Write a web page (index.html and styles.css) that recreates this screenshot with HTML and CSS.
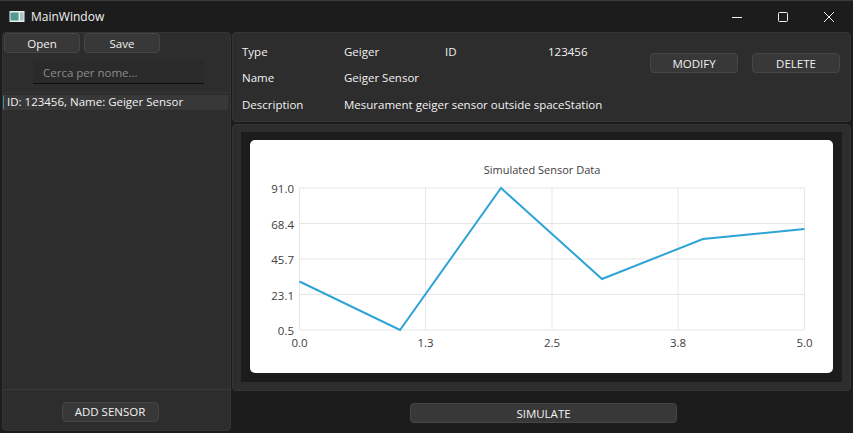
FILE: index.html
```html
<!DOCTYPE html>
<html lang="en">
<head>
    <meta charset="UTF-8">
    <meta name="viewport" content="width=device-width, initial-scale=1.0">
    <title>MainWindow</title>
    <link rel="stylesheet" href="styles.css">
</head>
<body>
    <div class="window">
        <header class="titlebar">
            <svg class="app-icon" width="16" height="14" viewBox="0 0 16 14">
                <rect x="0.5" y="1" width="15" height="11" fill="#e8eeee"/>
                <rect x="1.5" y="2.5" width="8" height="8" fill="#4f9a8c"/>
                <rect x="11" y="2.5" width="3.5" height="8" fill="#a9c4c8"/>
            </svg>
            <span class="title">MainWindow</span>
            <div class="window-buttons">
                <svg width="12" height="12" viewBox="0 0 12 12"><path d="M1 6.5H11" stroke="#f0f0f0" fill="none"/></svg>
                <svg width="12" height="12" viewBox="0 0 12 12"><rect x="1.5" y="1.5" width="9" height="9" rx="1" stroke="#f0f0f0" fill="none"/></svg>
                <svg width="12" height="12" viewBox="0 0 12 12"><path d="M1 1L11 11M11 1L1 11" stroke="#f0f0f0" fill="none"/></svg>
            </div>
        </header>

        <div class="content">
            <aside class="sidebar">
                <div class="file-buttons">
                    <button class="btn file-btn">Open</button>
                    <button class="btn file-btn">Save</button>
                </div>
                <div class="search-row">
                    <input class="search" type="text" placeholder="Cerca per nome...">
                </div>
                <ul class="sensor-list">
                    <li class="sensor-item">ID: 123456, Name: Geiger Sensor</li>
                </ul>
                <div class="sidebar-footer">
                    <button class="btn add-btn">ADD SENSOR</button>
                </div>
            </aside>

            <main class="main">
                <section class="details panel">
                    <div class="details-grid">
                        <span>Type</span><span>Geiger</span><span>ID</span><span>123456</span>
                        <span>Name</span><span class="wide">Geiger Sensor</span>
                        <span>Description</span><span class="wide">Mesurament geiger sensor outside spaceStation</span>
                    </div>
                    <div class="detail-buttons">
                        <button class="btn action-btn">MODIFY</button>
                        <button class="btn action-btn">DELETE</button>
                    </div>
                </section>

                <section class="chart-panel panel">
                    <div class="chart-well">
                        <div class="chart-card">
                            <svg class="chart" width="583" height="233" viewBox="250 140 583 233">
                                <g class="grid">
                                    <path d="M299.5 188H804.5M299.5 223.5H804.5M299.5 259H804.5M299.5 294.5H804.5M299.5 330H804.5"/>
                                    <path d="M299.5 188V330M425.5 188V330M552 188V330M678 188V330M804.5 188V330"/>
                                </g>
                                <path class="series" d="M299.5 281.5L400 330L501 188L602 279L703 239L804.5 229"/>
                                <text class="chart-title" x="542" y="174">Simulated Sensor Data</text>
                                <g class="y-labels">
                                    <text x="294" y="193">91.0</text>
                                    <text x="294" y="229">68.4</text>
                                    <text x="294" y="264">45.7</text>
                                    <text x="294" y="300">23.1</text>
                                    <text x="294" y="335">0.5</text>
                                </g>
                                <g class="x-labels">
                                    <text x="299.5" y="347">0.0</text>
                                    <text x="425.5" y="347">1.3</text>
                                    <text x="552" y="347">2.5</text>
                                    <text x="678" y="347">3.8</text>
                                    <text x="804.5" y="347">5.0</text>
                                </g>
                            </svg>
                        </div>
                    </div>
                </section>

                <div class="simulate-row">
                    <button class="btn simulate-btn">SIMULATE</button>
                </div>
            </main>
        </div>
    </div>
</body>
</html>
```

FILE: styles.css
```css
* {
    box-sizing: border-box;
}

body {
    margin: 0;
    width: 853px;
    height: 433px;
    overflow: hidden;
    background-color: #1c1c1c;
    color: #f2f2f2;
    font-family: "Open Sans", "Noto Sans", sans-serif;
    font-size: 11.5px;
}

.window {
    display: flex;
    flex-direction: column;
    height: 433px;
    border-top: 1px solid #3a3a3a;
    background-color: #1c1c1c;
}

.titlebar {
    display: flex;
    align-items: center;
    height: 31px;
    padding-left: 9px;
    flex-shrink: 0;
}

.title {
    margin-left: 6px;
    font-size: 12px;
}

.window-buttons {
    display: flex;
    gap: 34px;
    margin-left: auto;
    margin-right: 18px;
}

.content {
    display: flex;
    gap: 1px;
    flex: 1;
    padding: 0 2px 2px;
    min-height: 0;
}

.btn {
    height: 20px;
    padding: 0;
    background-color: #383838;
    border: 1px solid #464646;
    border-radius: 4px;
    color: #f2f2f2;
    font-family: inherit;
    font-size: 11.5px;
}

.sidebar {
    display: flex;
    flex-direction: column;
    width: 229px;
    background-color: #2d2d2d;
    border: 1px solid #353535;
    border-radius: 4px;
}

.file-buttons {
    display: flex;
    gap: 4px;
    padding: 0 0 0 1px;
}

.file-btn {
    width: 76px;
}

.search-row {
    padding: 8px 0 0 30px;
    border-bottom: 1px solid #353535;
    height: 40px;
}

.search {
    display: block;
    width: 171px;
    height: 23px;
    padding: 0 10px;
    background-color: #2a2a2a;
    border: none;
    border-bottom: 1px solid #0c0c0c;
    border-radius: 3px 3px 0 0;
    color: #f2f2f2;
    font-family: inherit;
    font-size: 11.5px;
}

.search::placeholder {
    color: #8c8c8c;
}

.sensor-list {
    flex: 1;
    margin: 0;
    padding: 2px 2px 0 0;
    list-style: none;
}

.sensor-item {
    height: 15px;
    padding-left: 3px;
    line-height: 14px;
    background-color: #383838;
    border-left: 1px solid #3c8f97;
    border-radius: 2px;
}

.sidebar-footer {
    display: flex;
    justify-content: center;
    align-items: center;
    height: 41px;
    border-top: 1px solid #3a3a3a;
    padding-right: 13px;
    padding-top: 3px;
}

.add-btn {
    width: 97px;
}

.main {
    display: flex;
    flex-direction: column;
    flex: 1;
    min-width: 0;
}

.panel {
    background-color: #2d2d2d;
    border: 1px solid #353535;
    border-radius: 4px;
}

.details {
    display: flex;
    height: 90px;
    flex-shrink: 0;
}

.details-grid {
    display: grid;
    grid-template-columns: 102px 101px 103px 100px;
    grid-auto-rows: 26.5px;
    align-items: center;
    padding: 5px 0 0 9px;
    width: 417px;
}

.wide {
    grid-column: span 3;
}

.detail-buttons {
    display: flex;
    gap: 14px;
    padding: 20px 0 0 0;
}

.action-btn {
    width: 88px;
}

.chart-panel {
    height: 267px;
    margin-top: 2px;
    padding: 7px 8px 8px;
}

.chart-well {
    height: 100%;
    padding: 8px 9px;
    background-color: #1c1c1c;
}

.chart-card {
    height: 233px;
    background-color: #ffffff;
    border-radius: 5px;
}

.chart {
    display: block;
}

.grid path {
    fill: none;
    stroke: #e6e6e6;
    stroke-width: 1;
}

.series {
    fill: none;
    stroke: #2ea3d5;
    stroke-width: 2;
}

.chart text {
    fill: #404040;
    font-size: 11.5px;
}

.chart .chart-title {
    text-anchor: middle;
    font-size: 11px;
}

.y-labels text {
    text-anchor: end;
}

.x-labels text {
    text-anchor: middle;
}

.simulate-row {
    display: flex;
    justify-content: center;
    padding: 12px 0 0 4px;
}

.simulate-btn {
    width: 267px;
}
```
